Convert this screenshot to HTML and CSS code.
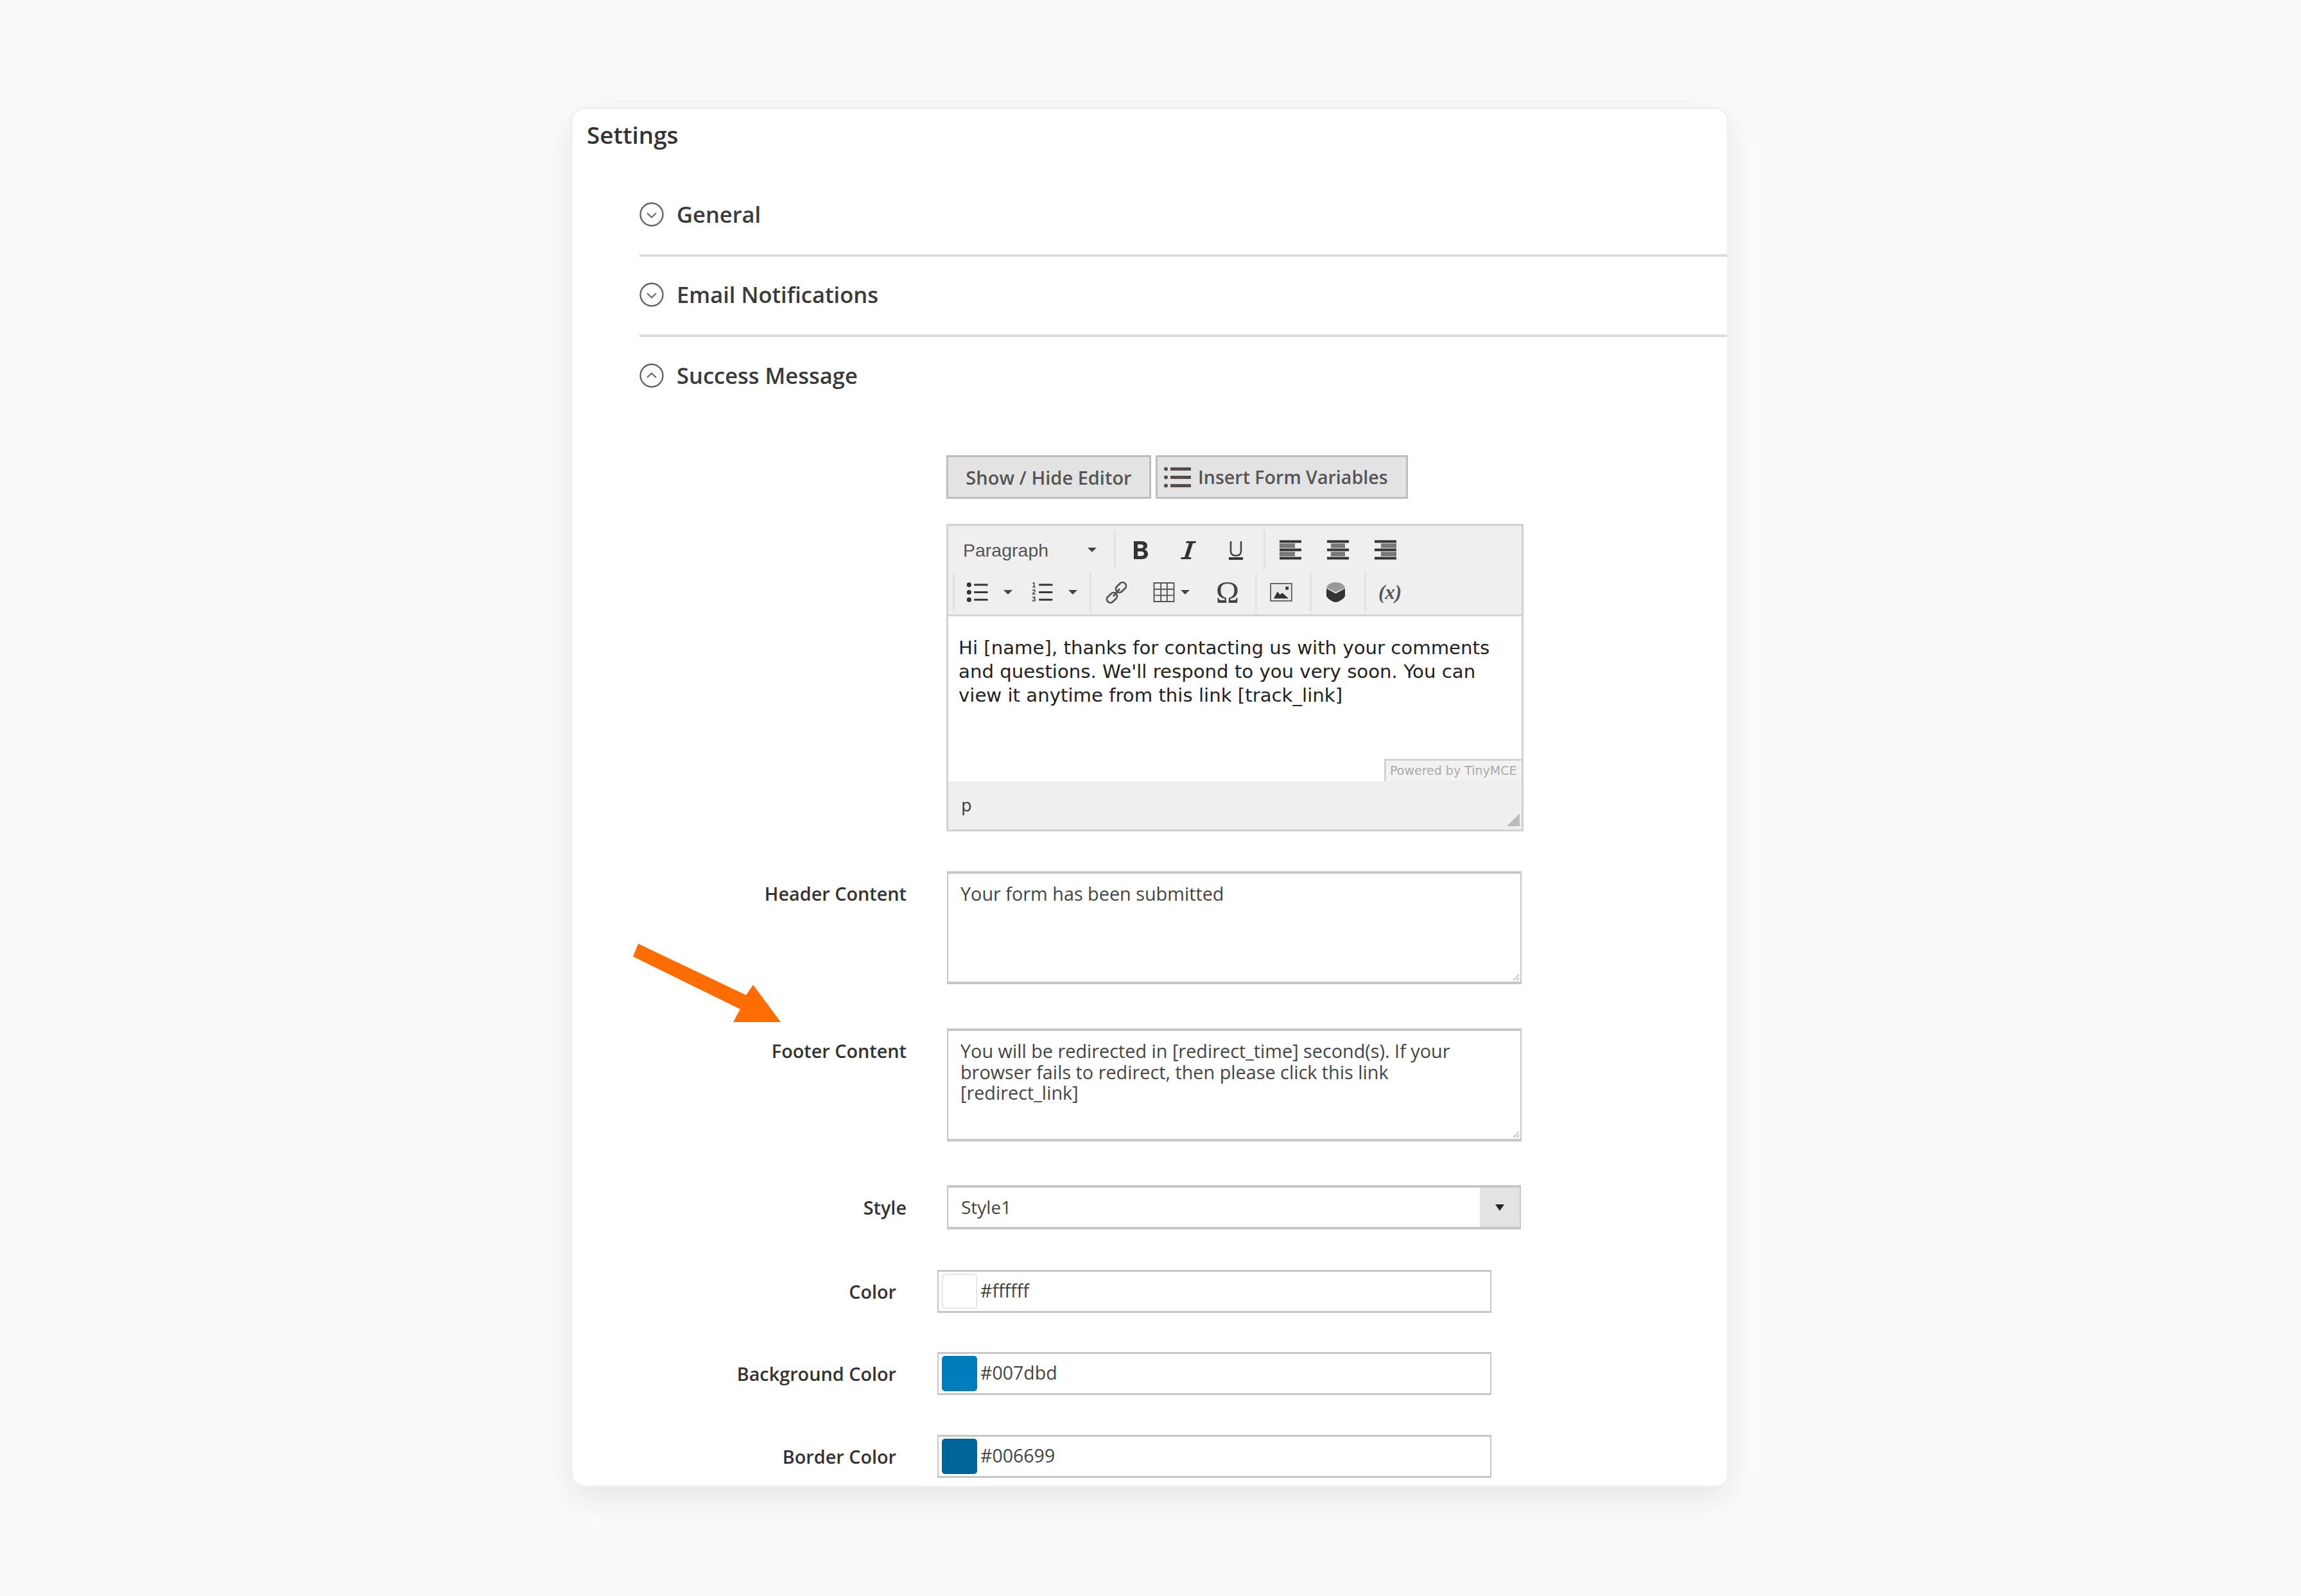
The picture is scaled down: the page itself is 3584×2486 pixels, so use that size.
FILE: index.html
```html
<!DOCTYPE html>
<html lang="en">
<head>
<meta charset="utf-8">
<title>Settings</title>
<link rel="stylesheet" href="styles.css">
</head>
<body>
<svg width="0" height="0" class="defs">
  <defs>
    <symbol id="chev-down" viewBox="0 0 38 38"><circle cx="19" cy="19" r="17.5" fill="none" stroke="#666" stroke-width="2.4"/><path d="M12 17l7 6.5 7-6.5" fill="none" stroke="#666" stroke-width="2.2"/></symbol>
    <symbol id="chev-up" viewBox="0 0 38 38"><circle cx="19" cy="19" r="17.5" fill="none" stroke="#666" stroke-width="2.4"/><path d="M12 22l7-6.5 7 6.5" fill="none" stroke="#666" stroke-width="2.2"/></symbol>
    <symbol id="grip" viewBox="0 0 12 12"><path d="M11 2L2 11M11 7l-4 4" fill="none" stroke="#aaa" stroke-width="1.2"/></symbol>
  </defs>
</svg>
<main class="card">
  <h1 class="card-title">Settings</h1>
  <section class="accordion">
    <div class="acc-item acc-line"><svg class="acc-icon"><use href="#chev-down"/></svg><span>General</span></div>
    <div class="acc-item acc-line"><svg class="acc-icon"><use href="#chev-down"/></svg><span>Email Notifications</span></div>
    <div class="acc-item acc-last"><svg class="acc-icon"><use href="#chev-up"/></svg><span>Success Message</span></div>
  </section>

  <div class="editor-block">
    <div class="btn-row">
      <button class="btn btn-editor">Show / Hide Editor</button>
      <button class="btn btn-vars">
        <svg class="vars-icon" viewBox="0 0 42 33"><g fill="#544c45"><circle cx="3" cy="3.5" r="3"/><circle cx="3" cy="16.5" r="3"/><circle cx="3" cy="29.5" r="3"/><rect x="10" y="1" width="32" height="5"/><rect x="10" y="14" width="32" height="5"/><rect x="10" y="27" width="32" height="5"/></g></svg>
        <span>Insert Form Variables</span>
      </button>
    </div>

    <div class="editor">
      <div class="toolbar">
        <div class="tb-row">
          <div class="tb-format"><span>Paragraph</span><i class="caret"></i></div>
          <div class="tb-group">
            <div class="tb-btn"><svg viewBox="0 0 24 30" class="ic-b"><path fill="#333" fill-rule="evenodd" d="M1 1h12c6 0 9 3 9 7 0 3-2 5-4.500 6 3.500 1 5.500 3.500 5.500 7 0 5-4 8-10 8H1zM7 6v6h5c2.500 0 4-1 4-3s-1.500-3-4-3zM7 17v7h6c2.500 0 4-1.300 4-3.500S15.500 17 13 17z"/></svg></div>
            <div class="tb-btn"><svg viewBox="0 0 26 30" class="ic-b"><path fill="#333" d="M10 1h15l-.8 3H20l-7 22h4.500l-.8 3H1l.8-3H7l7-22H9.200z"/></svg></div>
            <div class="tb-btn"><svg viewBox="0 0 24 30" class="ic-b"><path fill="none" stroke="#444" stroke-width="2.600" d="M4 1v15c0 5 3 7.500 8 7.500s8-2.500 8-7.500V1"/><rect x="1" y="26" width="22" height="4" fill="#333"/></svg></div>
          </div>
          <div class="tb-group tb-group-flat">
            <div class="tb-btn"><svg viewBox="0 0 34 30" class="ic-a"><path fill="#333" d="M0 0h34v4H0zM0 13h34v4H0zM0 26h34v4H0z"/><path fill="#777" d="M0 5h24v7H0zM0 18h24v7H0z"/></svg></div>
            <div class="tb-btn"><svg viewBox="0 0 34 30" class="ic-a"><path fill="#333" d="M0 0h34v4H0zM0 13h34v4H0zM0 26h34v4H0z"/><path fill="#777" d="M6 5h22v7H6zM6 18h22v7H6z"/></svg></div>
            <div class="tb-btn"><svg viewBox="0 0 34 30" class="ic-a"><path fill="#333" d="M0 0h34v4H0zM0 13h34v4H0zM0 26h34v4H0z"/><path fill="#777" d="M10 5h24v7H10zM10 18h24v7H10z"/></svg></div>
          </div>
        </div>
        <div class="tb-row tb-row-2">
          <div class="tb-group tb-group-lists">
            <div class="tb-split"><svg viewBox="0 0 34 32" class="ic-a"><g fill="#333"><circle cx="4" cy="4" r="3.700"/><circle cx="4" cy="16" r="3.700"/><circle cx="4" cy="28" r="3.700"/><rect x="12" y="2.500" width="22" height="3"/><rect x="12" y="14.500" width="22" height="3"/><rect x="12" y="26.500" width="22" height="3"/></g></svg><i class="caret caret-split"></i></div>
            <div class="tb-split"><svg viewBox="0 0 34 32" class="ic-a ic-num"><g fill="#333"><text class="num" x="1" y="8">1</text><text class="num" x="1" y="20">2</text><text class="num" x="1" y="31">3</text><rect x="12" y="2.500" width="22" height="3"/><rect x="12" y="14.500" width="22" height="3"/><rect x="12" y="26.500" width="22" height="3"/></g></svg><i class="caret caret-split"></i></div>
          </div>
          <div class="tb-group">
            <div class="tb-btn"><svg viewBox="0 0 34 36" class="ic-c"><g fill="none" stroke="#555" stroke-width="2.800"><rect x="-9" y="-5.500" width="18" height="11" rx="5.500" transform="translate(10 26) rotate(-45)"/><rect x="-9" y="-5.500" width="18" height="11" rx="5.500" transform="translate(24 10) rotate(-45)"/><path d="M12 24l10-12"/></g></svg></div>
            <div class="tb-split tb-split-table"><svg viewBox="0 0 34 32" class="ic-a"><path fill="none" stroke="#555" stroke-width="2" d="M1 1h32v30H1zM1 11h32M1 21h32M12 1v30M22 1v30"/></svg><i class="caret caret-table"></i></div>
            <div class="tb-btn"><span class="omega">Ω</span></div>
          </div>
          <div class="tb-group tb-group-tight">
            <div class="tb-btn"><svg viewBox="0 0 36 30" class="ic-img"><rect x="1" y="1" width="34" height="28" fill="#e8e8e8" stroke="#666" stroke-width="2"/><path fill="#333" d="M6 25l6-11 4 5 4-3 10 9z"/><rect x="25" y="6" width="5" height="5" fill="#333"/></svg></div>
          </div>
          <div class="tb-group tb-group-tight">
            <div class="tb-btn"><svg viewBox="0 0 30 32" class="ic-cube"><path fill="#999" d="M15 0c7 0 14 3 15 9L15 16 0 9C1 3 8 0 15 0z"/><path fill="#333" d="M0 10l15 8 15-8v12c-1 4-10 10-15 10S1 26 0 22z"/></svg></div>
          </div>
          <div class="tb-group tb-group-last">
            <div class="tb-btn"><span class="var-x">(x)</span></div>
          </div>
        </div>
      </div>
      <div class="editor-body">
        <p>Hi [name], thanks for contacting us with your comments and questions. We'll respond to you very soon. You can view it anytime from this link [track_link]</p>
        <span class="powered">Powered by TinyMCE</span>
      </div>
      <div class="statusbar"><span>p</span><svg class="status-grip" viewBox="0 0 20 20"><path fill="#bbb" d="M20 0v20H0z"/></svg></div>
    </div>
  </div>

  <div class="row row-header">
    <label class="label">Header Content</label>
    <div class="textarea"><span>Your form has been submitted</span><svg class="grip"><use href="#grip"/></svg></div>
  </div>
  <div class="row row-footer">
    <label class="label">Footer Content</label>
    <div class="textarea"><span>You will be redirected in [redirect_time] second(s). If your browser fails to redirect, then please click this link [redirect_link]</span><svg class="grip"><use href="#grip"/></svg></div>
  </div>
  <div class="row row-style">
    <label class="label">Style</label>
    <div class="select"><span>Style1</span><div class="select-btn"><i class="select-caret"></i></div></div>
  </div>
  <div class="row row-color row-c1">
    <label class="label">Color</label>
    <div class="colorfield"><i class="swatch swatch-white"></i><span>#ffffff</span></div>
  </div>
  <div class="row row-color row-c2">
    <label class="label">Background Color</label>
    <div class="colorfield"><i class="swatch swatch-bg"></i><span>#007dbd</span></div>
  </div>
  <div class="row row-color row-c3">
    <label class="label">Border Color</label>
    <div class="colorfield"><i class="swatch swatch-border"></i><span>#006699</span></div>
  </div>

  <svg class="arrow" viewBox="0 0 240 130"><path fill="#ff6c00" d="M12 0L180 80 191 64 234 122 160 122 171 102 4 20z"/></svg>
</main>
</body>
</html>
```
FILE: styles.css
```css
* { box-sizing: border-box; }
html, body { margin: 0; padding: 0; }
body {
  width: 3584px;
  height: 2486px;
  background: #fafafa;
  font-family: "Open Sans", "Liberation Sans", sans-serif;
  color: #333;
  overflow: hidden;
  padding: 170px 0 0 892px;
}
.defs { position: absolute; }
.card {
  position: relative;
  width: 1798px;
  height: 2144px;
  background: #fff;
  border-radius: 18px;
  overflow: hidden;
  box-shadow: 0 0 0 3px #f0f0f0;
}
body::before {
  content: "";
  position: absolute;
  left: 892px;
  top: 170px;
  width: 1798px;
  height: 2144px;
  border-radius: 18px;
  box-shadow: 0 18px 50px rgba(0, 0, 0, .09);
}
.card-title {
  margin: 0;
  padding: 15px 0 40px 22px;
  font-size: 36.800px;
  line-height: 50px;
  font-weight: 600;
  color: #333;
}
.accordion { margin-left: 104px; }
.acc-item {
  height: 125px;
  display: flex;
  align-items: center;
  padding-bottom: 4px;
  gap: 20px;
  font-size: 34.500px;
  font-weight: 600;
  color: #3a3a3a;
}
.acc-last { height: 123px; }
.acc-line { border-bottom: 4px solid #dcdcdc; }
.acc-icon { width: 38px; height: 38px; flex: none; }

.editor-block { margin: 61px 0 0 582px; }
.btn-row { display: flex; gap: 7px; }
.btn {
  height: 68px;
  background: #e3e3e3;
  border: 3px solid #bdbdbd;
  border-radius: 0;
  font: 600 29px/1 "Open Sans", sans-serif;
  color: #555;
  padding: 0;
  display: flex;
  align-items: center;
  justify-content: center;
}
.btn-editor { width: 319px; }
.btn-vars { width: 393px; justify-content: flex-start; padding-left: 10px; gap: 11px; font-size: 28.600px; }
.vars-icon { width: 42px; height: 33px; }

.editor {
  margin-top: 39px;
  width: 899px;
  border: 3px solid #d2d2d2;
}
.toolbar {
  height: 141px;
  background: #efefef;
  padding-top: 7px;
  border-bottom: 3px solid #d4d4d4;
  display: flex;
  flex-direction: column;
  gap: 5px;
}
.tb-row { display: flex; height: 61px; align-items: stretch; }
.tb-row-2 { padding-left: 7px; }
.tb-format {
  width: 258px;
  padding: 0 27px 0 23px;
  display: flex;
  align-items: center;
  justify-content: space-between;
  font: 28.500px "Liberation Sans", sans-serif;
  color: #555;
}
.tb-format > span { margin-top: 1px; }
.tb-group {
  display: flex;
  align-items: center;
  border-left: 3px solid #e2e2e2;
  padding: 0 6px 0 2px;
}
.tb-group-lists { padding: 0 8px 0 0; }
.tb-group-flat, .tb-group-last { padding-right: 0; }
.tb-group-tight { padding: 0 8px 0 0; }
.tb-group-last { padding-left: 0; }
.tb-btn {
  width: 74px;
  height: 100%;
  display: flex;
  align-items: center;
  justify-content: center;
}
.tb-split {
  width: 101px;
  height: 100%;
  display: flex;
  align-items: center;
  padding-left: 18px;
}
.tb-split-table { width: 99px; padding-left: 20px; }
.caret {
  width: 0;
  height: 0;
  border: 7px solid transparent;
  border-top: 7px solid #444;
  border-bottom: 0;
  flex: none;
}
.caret-split { margin-left: 24px; }
.caret-table { margin-left: 9px; }
.num { font: 700 10.500px "Liberation Sans", sans-serif; }
.ic-b { height: 30px; width: 26px; }
.ic-a { width: 34px; height: 31px; }
.ic-num { overflow: visible; }
.ic-c { width: 34px; height: 36px; }
.ic-img { width: 35px; height: 29px; }
.ic-cube { width: 29px; height: 31px; }
.omega { font: 49px/1 "Liberation Serif", serif; color: #444; }
.var-x { font: italic 700 31px/1 "Liberation Serif", serif; color: #555; }

.editor-body {
  position: relative;
  height: 260px;
  padding: 31px 16px 0 16px;
  background: #fff;
  border-bottom: 3px solid #d2d2d2;
  margin-bottom: -3px;
}
.editor-body p {
  margin: 0;
  font: 29.200px/37px "DejaVu Sans", sans-serif;
  color: #222;
}
.powered {
  position: absolute;
  right: 0;
  bottom: 0;
  width: 214px;
  height: 35px;
  background: #f2f2f2;
  border: solid #d2d2d2;
  border-width: 3px 0 0 3px;
  font: 19px/31px "DejaVu Sans", sans-serif;
  color: #aaa;
  padding-left: 6px;
  white-space: nowrap;
}
.statusbar {
  position: relative;
  height: 75px;
  background: #efefef;
  display: flex;
  align-items: center;
  padding-left: 20px;
  font: 26px "DejaVu Sans", sans-serif;
  color: #444;
}
.status-grip { position: absolute; right: 3px; bottom: 5px; width: 20px; height: 20px; }

.row { display: flex; }
.label {
  font-size: 28.800px;
  line-height: 38px;
  font-weight: 600;
  color: #333;
  text-align: right;
  flex: none;
  width: 520px;
  margin-right: 63px;
  padding-top: 16px;
}
.row-header { margin-top: 62px; }
.row-footer { margin-top: 69px; }
.row-style { margin-top: 68px; }
.row-c1 { margin-top: 63px; }
.row-c2 { margin-top: 61px; }
.row-c3 { margin-top: 62px; }
.row-color .label { width: 504px; margin-right: 64px; padding-top: 15px; }
.textarea {
  position: relative;
  width: 895px;
  height: 176px;
  border: solid #c6c6c6;
  border-width: 4px 2px;
  padding: 15px 30px 0 19px;
  font-size: 28.800px;
  line-height: 32.700px;
  color: #444;
}
.grip { position: absolute; right: 1px; bottom: 1px; width: 12px; height: 12px; }
.select {
  width: 894px;
  height: 69px;
  border: solid #c6c6c6;
  border-width: 4px 2px;
  display: flex;
  align-items: center;
  justify-content: space-between;
  padding-left: 20px;
  font-size: 28px;
  color: #444;
}
.select > span { margin-top: -2px; }
.select-btn {
  width: 62px;
  height: 100%;
  background: #e3e3e3;
  display: flex;
  align-items: center;
  justify-content: center;
}
.select-caret { width: 0; height: 0; border: 7px solid transparent; border-top: 10px solid #222; border-bottom: 0; }
.colorfield {
  width: 863px;
  height: 67px;
  border: solid #c6c6c6;
  border-width: 3px 2px;
  display: flex;
  align-items: center;
  padding-left: 5px;
  gap: 5px;
  font-size: 28.500px;
  color: #444;
}
.colorfield > span { margin-top: -4px; }
.swatch { width: 55px; height: 55px; border-radius: 5px; flex: none; }
.swatch-white { background: #fff; border: 2px solid #e6e6e6; }
.swatch-bg { background: #007dbd; }
.swatch-border { background: #006699; }
.arrow { position: absolute; left: 90px; top: 1300px; width: 240px; height: 130px; overflow: visible; }
```
